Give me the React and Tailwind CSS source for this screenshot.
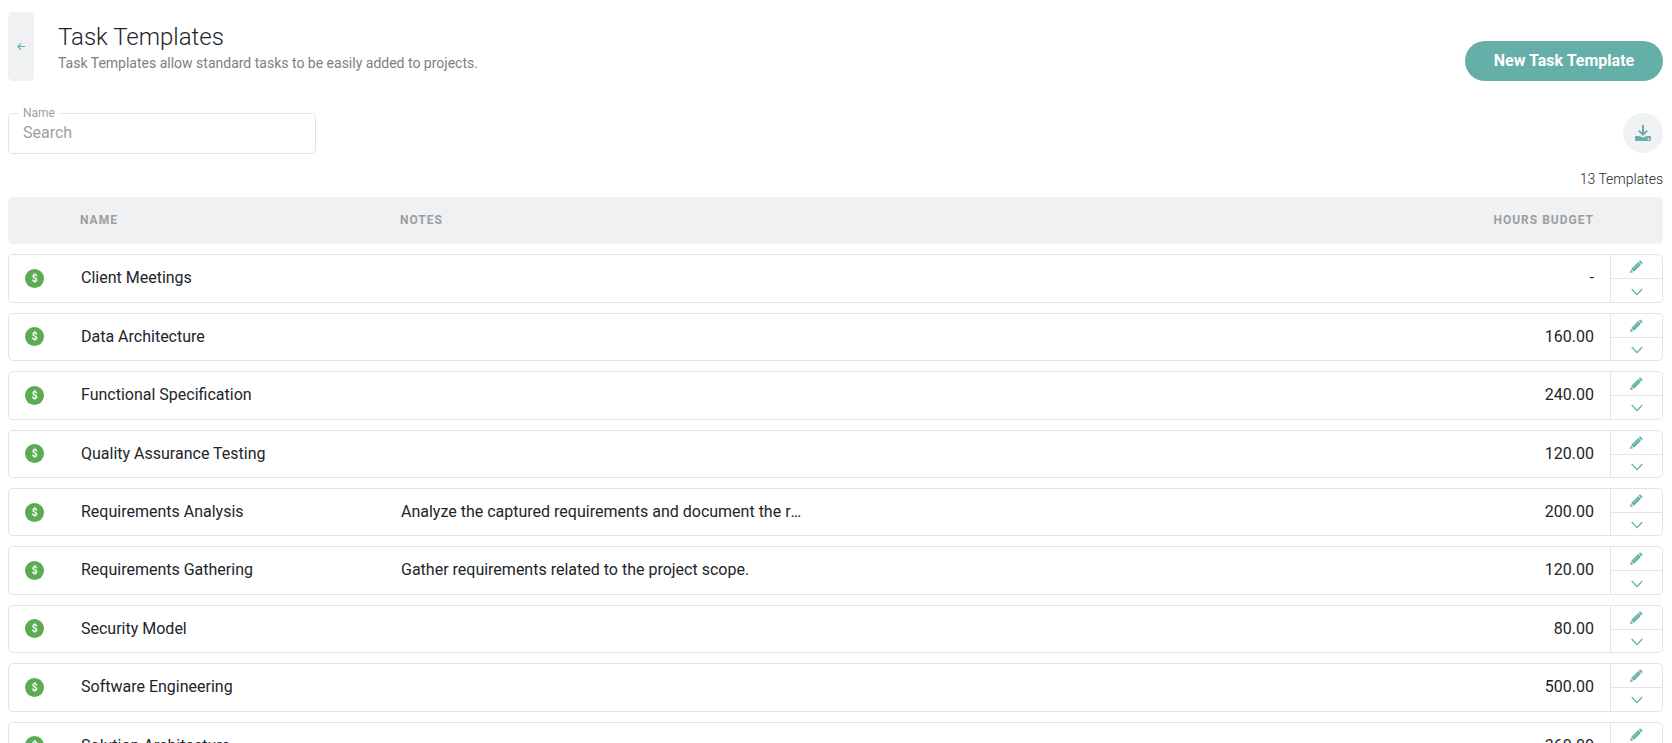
import React from "react";

const rows = [
  ["Client Meetings", "", "-"],
  ["Data Architecture", "", "160.00"],
  ["Functional Specification", "", "240.00"],
  ["Quality Assurance Testing", "", "120.00"],
  ["Requirements Analysis", "Analyze the captured requirements and document the results of the analysis.", "200.00"],
  ["Requirements Gathering", "Gather requirements related to the project scope.", "120.00"],
  ["Security Model", "", "80.00"],
  ["Software Engineering", "", "500.00"],
  ["Solution Architecture", "", "360.00"],
];

const Pencil = () => (
  <svg viewBox="0 0 12 12" className="w-[13px] h-[13px]" fill="#64afa8">
    <path d="M9.3 0.2 11.8 2.7 10.6 3.9 8.1 1.4z" />
    <path d="M7.6 1.9 10.1 4.4 3.6 10.9 1.1 8.4z" />
    <path d="M0.8 9 3 11.2 0 12z" />
    <path d="M7.6 3.6 2.9 8.3" stroke="#ffffff" strokeOpacity="0.55" strokeWidth="0.6" fill="none" />
  </svg>
);

const Chevron = () => (
  <svg viewBox="0 0 12 8" className="w-[12px] h-[8px]" fill="none" stroke="#64afa8" strokeWidth="1.3">
    <path d="M0.7 1 L6 6.6 L11.3 1" />
  </svg>
);

const Download = () => (
  <svg viewBox="0 0 16 16" className="w-[16px] h-[16px]" fill="#64afa8">
    <path d="M7 0h2v7.4l2.6-2.5 1.3 1.4L8 11 3.1 6.3l1.3-1.4L7 7.4z" />
    <path fillRule="evenodd" d="M1.2 11h2.6L8 12.6 12.2 11h2.6c.7 0 1.2.5 1.2 1.2v2.6c0 .7-.5 1.2-1.2 1.2H1.2C.5 16 0 15.5 0 14.8v-2.6C0 11.5.5 11 1.2 11zm12.3 2a.9.9 0 1 0 0 1.8.9.9 0 0 0 0-1.8z" />
  </svg>
);

function Row({ name, notes, hours }) {
  return (
    <div className="flex h-[48.4px] mb-[10px] shrink-0 border border-[#e3e4e5] rounded-[5px] bg-white overflow-hidden">
      <div className="w-[72px] shrink-0 flex items-center pl-[16px]">
        <span className="w-[19px] h-[19px] rounded-full bg-[#5bab52] text-white text-[10px] font-bold flex items-center justify-center">$</span>
      </div>
      <div className="w-[320px] shrink-0 text-[16px] text-[#212529] leading-[45px] truncate">{name}</div>
      <div className="flex-1 min-w-0 text-[16px] text-[#212529] leading-[45px]">
        <div className="max-w-[404px] truncate">{notes}</div>
      </div>
      <div className="w-[150px] shrink-0 text-[16px] text-[#212529] leading-[45px] text-right pr-[16px]">{hours}</div>
      <div className="w-[52px] shrink-0 border-l border-[#e3e4e5] flex flex-col">
        <div className="h-[24px] flex items-center justify-center border-b border-[#e3e4e5]">
          <Pencil />
        </div>
        <div className="flex-1 flex items-center justify-center pt-[2px]">
          <Chevron />
        </div>
      </div>
    </div>
  );
}

export default function App() {
  return (
    <div className="h-screen overflow-hidden bg-white font-['Roboto','Liberation_Sans',sans-serif] pl-[8px] pr-[9px] pt-[12px]">
      <div className="flex items-start h-[69px]">
        <button className="w-[26px] h-[69px] rounded-[5px] bg-[#f0f1f2] flex items-center justify-center">
          <svg viewBox="0 0 10 10" className="w-[9px] h-[9px]" fill="none" stroke="#64afa8" strokeWidth="1.2">
            <path d="M9 5H1M4.5 1.5 1 5l3.5 3.5" />
          </svg>
        </button>
        <div className="ml-[24px] flex-1 pt-[10px]">
          <h1 className="text-[24px] font-light leading-[30px] text-[#212529]">Task Templates</h1>
          <p className="text-[14px] leading-[20px] text-[#7b8087] mt-[1px]">Task Templates allow standard tasks to be easily added to projects.</p>
        </div>
        <button className="mt-[29px] w-[198px] h-[40px] rounded-full bg-[#64afa8] text-white text-[16px] font-bold">New Task Template</button>
      </div>

      <div className="flex items-start justify-between mt-[32px]">
        <div className="relative w-[308px] h-[41px] border border-[#e3e4e5] rounded-[5px] flex items-center pl-[14px] pb-[2px]">
          <span className="absolute left-[10px] -top-[8px] bg-white px-[4px] text-[12px] leading-[14px] text-[#9b9fa3]">Name</span>
          <span className="text-[16px] text-[#9b9fa3]">Search</span>
        </div>
        <button className="w-[40px] h-[40px] rounded-full bg-[#f0f1f2] flex items-center justify-center">
          <Download />
        </button>
      </div>

      <div className="text-right text-[14px] font-light leading-[18px] text-[#212529] mt-[16px]">13 Templates</div>

      <div className="flex items-center h-[47px] mt-[9px] mb-[10.4px] pb-[2px] rounded-[5px] bg-[#f0f1f2] text-[12px] font-bold tracking-[1px] text-[#9b9ea1]">
        <div className="w-[72px] shrink-0" />
        <div className="w-[320px] shrink-0">NAME</div>
        <div className="flex-1">NOTES</div>
        <div className="w-[150px] shrink-0 text-right pr-[14px]">HOURS BUDGET</div>
        <div className="w-[55px] shrink-0" />
      </div>

      <div className="flex flex-col">
        {rows.map((r) => (
          <Row key={r[0]} name={r[0]} notes={r[1]} hours={r[2]} />
        ))}
      </div>
    </div>
  );
}
